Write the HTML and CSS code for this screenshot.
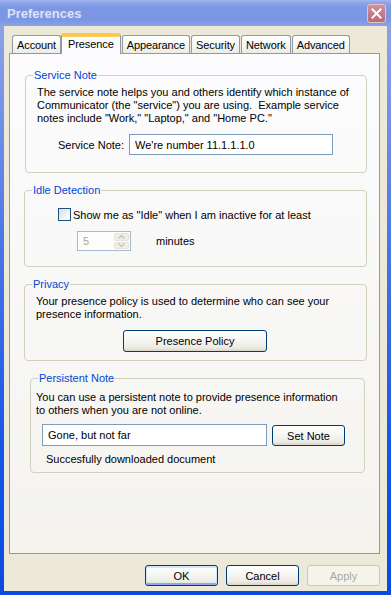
FILE: index.html
```html
<!DOCTYPE html>
<html lang="en">
<head>
    <meta charset="UTF-8">
    <title>Preferences</title>
    <link rel="stylesheet" href="styles.css">
</head>
<body>
<div class="window">
    <div class="titlebar">
        <span class="title">Preferences</span>
        <span class="close-btn">
            <svg width="11" height="11" viewBox="0 0 11 11"><path d="M1.5 1.5 L9.5 9.5 M9.5 1.5 L1.5 9.5" stroke="#fff" stroke-width="2" stroke-linecap="square"/></svg>
        </span>
    </div>

    <div class="frame">
        <div class="tabs">
            <div class="tab">Account</div>
            <div class="tab active">Presence</div>
            <div class="tab">Appearance</div>
            <div class="tab">Security</div>
            <div class="tab">Network</div>
            <div class="tab">Advanced</div>
        </div>

        <div class="panel">
            <fieldset class="group group-service">
                <legend>Service Note</legend>
                <p class="desc">The service note helps you and others identify which instance of<br>Communicator (the "service") you are using.&nbsp; Example service<br>notes include "Work," "Laptop," and "Home PC."</p>
                <div class="note-row">
                    <label for="serviceNote">Service Note:</label>
                    <input type="text" id="serviceNote" class="textbox service-input" value="We're number 11.1.1.1.0">
                </div>
            </fieldset>

            <fieldset class="group group-idle">
                <legend>Idle Detection</legend>
                <div class="check-row">
                    <span class="checkbox"></span>
                    <span>Show me as "Idle" when I am inactive for at least</span>
                </div>
                <div class="spin-row">
                    <div class="spinner">
                        <span class="spin-value">5</span>
                        <span class="spin-buttons">
                            <span class="spin-btn"><svg width="7" height="4" viewBox="0 0 7 4"><path d="M0.5 3.5 L3.5 0.5 L6.5 3.5" fill="none" stroke="#c4c3b6" stroke-width="1.2"/></svg></span>
                            <span class="spin-btn"><svg width="7" height="4" viewBox="0 0 7 4"><path d="M0.5 0.5 L3.5 3.5 L6.5 0.5" fill="none" stroke="#c4c3b6" stroke-width="1.2"/></svg></span>
                        </span>
                    </div>
                    <span class="spin-label">minutes</span>
                </div>
            </fieldset>

            <fieldset class="group group-privacy">
                <legend>Privacy</legend>
                <p class="desc">Your presence policy is used to determine who can see your<br>presence information.</p>
                <div class="center-row">
                    <button class="btn policy-btn">Presence Policy</button>
                </div>
            </fieldset>

            <fieldset class="group group-persistent">
                <legend>Persistent Note</legend>
                <p class="desc">You can use a persistent note to provide presence information<br>to others when you are not online.</p>
                <div class="persist-row">
                    <input type="text" class="textbox persist-input" value="Gone, but not far">
                    <button class="btn setnote-btn">Set Note</button>
                </div>
                <div class="status">Succesfully downloaded document</div>
            </fieldset>
        </div>

        <div class="dialog-buttons">
            <button class="btn default">OK</button>
            <button class="btn">Cancel</button>
            <button class="btn" disabled>Apply</button>
        </div>
    </div>
</div>
</body>
</html>
```

FILE: styles.css
```css
body {
    margin: 0;
    font-family: "Liberation Sans", Arial, sans-serif;
    font-size: 11px;
    color: #000;
    background: #ece9d8;
}
.window {
    width: 391px;
    height: 595px;
    display: flex;
    flex-direction: column;
    overflow: hidden;
}
.titlebar {
    height: 26px;
    flex-shrink: 0;
    display: flex;
    align-items: center;
    justify-content: space-between;
    padding: 0 5px 0 7px;
    background: linear-gradient(#a3b6ef 0, #8aa2e8 3px, #7c97e3 8px, #7b96e2 20px, #8ba2e6 26px);
}
.title {
    font-weight: bold;
    font-size: 13px;
    color: #dbe4f8;
    padding-top: 1px;
}
.close-btn {
    width: 17px;
    height: 17px;
    border: 1px solid #e3c3cb;
    border-radius: 3px;
    background: linear-gradient(#d3909c, #c27886 60%, #b86a7a);
    display: flex;
    align-items: center;
    justify-content: center;
    margin-top: 1px;
}
.frame {
    flex-grow: 1;
    display: flex;
    flex-direction: column;
    border-style: solid;
    border-width: 0 4px 4px 4px;
    border-image: linear-gradient(#8ca3e8, #4a74e6 40%, #1556e8 75%, #0a4ce2) 1;
    background: #ece9d8;
    padding: 7px 7px 0 5px;
}

/* tabs */
.tabs {
    display: flex;
    align-items: flex-end;
    padding-left: 3px;
    height: 20px;
    position: relative;
    z-index: 1;
}
.tab {
    height: 18px;
    box-sizing: border-box;
    padding: 0 4px;
    margin-right: 1px;
    border: 1px solid #919b9c;
    border-bottom: none;
    border-radius: 3px 3px 0 0;
    background: linear-gradient(#ffffff, #f7f7f4 50%, #ecebe5);
    line-height: 18px;
    letter-spacing: -0.1px;
}
.tab.active {
    height: 21px;
    margin: 0 1px -1px -1px;
    padding: 0 6px;
    border-top: 3px solid #ffc83c;
    box-shadow: inset 0 1px 0 #f6d06a;
    background: #fcfcfe;
    line-height: 17px;
}

.panel {
    height: 501px;
    box-sizing: border-box;
    border: 1px solid #919b9c;
    background: linear-gradient(#fcfcfe, #f4f3ee);
    padding: 14px 0 0 14px;
}

/* group boxes */
.group {
    margin: 0 0 10px 0;
    padding: 4px 10px 0 11px;
    border: 1px solid #d0d0bf;
    border-radius: 4px;
    box-sizing: border-box;
    width: 343px;
}
.group legend {
    color: #0046d5;
    line-height: 14px;
    padding: 0 1px;
    margin-left: -4px;
}
.desc {
    margin: 0;
    line-height: 13px;
}
.group-service {
    margin-left: 1px;
    width: 342px;
    height: 105px;
}
.note-row {
    display: flex;
    align-items: center;
    margin-top: 9px;
    padding-left: 21px;
}
.note-row label {
    margin-right: 5px;
}
.textbox {
    font-family: inherit;
    font-size: 11px;
    border: 1px solid #7f9db9;
    background: #fff;
    padding: 0 5px;
    box-sizing: border-box;
    outline: none;
}
.service-input {
    width: 204px;
    height: 21px;
}

.group-idle {
    height: 84px;
    padding-top: 10px;
}
.check-row {
    display: flex;
    align-items: center;
    height: 15px;
    padding-left: 22px;
}
.checkbox {
    width: 13px;
    height: 13px;
    box-sizing: border-box;
    border: 1px solid #1c5180;
    background: linear-gradient(135deg, #dcdcd7, #fbfbf9 80%);
    margin-right: 2px;
}
.spin-row {
    display: flex;
    align-items: center;
    margin-top: 9px;
    padding-left: 41px;
}
.spinner {
    width: 54px;
    height: 20px;
    box-sizing: border-box;
    border: 1px solid #a7b9cf;
    background: #fdfdfc;
    display: flex;
    justify-content: space-between;
    padding: 1px;
}
.spin-value {
    color: #aca899;
    padding-left: 4px;
    line-height: 17px;
}
.spin-buttons {
    width: 15px;
    display: flex;
    flex-direction: column;
    gap: 1px;
}
.spin-btn {
    flex: 1;
    background: #efeee8;
    border: 1px solid #e4e3da;
    border-radius: 2px;
    display: flex;
    align-items: center;
    justify-content: center;
}
.spin-label {
    margin-left: 25px;
}

.group-privacy {
    height: 84px;
}
.center-row {
    display: flex;
    justify-content: center;
    margin-top: 9px;
    padding-right: 2px;
}
.btn {
    font-family: inherit;
    font-size: 11px;
    color: #000;
    height: 21px;
    box-sizing: border-box;
    border: 1px solid #003c74;
    border-radius: 3px;
    background: linear-gradient(#ffffff, #f6f6f3 45%, #ebeae3 85%, #d8d3c8);
    padding: 0;
}
.policy-btn {
    width: 144px;
    height: 22px;
}

.group-persistent {
    margin-left: 6px;
    width: 335px;
    height: 102px;
    padding: 6px 10px 0 5px;
}
.group-persistent legend {
    margin-left: 2px;
}
.persist-row {
    display: flex;
    align-items: flex-start;
    margin-top: 7px;
    padding-left: 6px;
}
.persist-input {
    width: 225px;
    height: 22px;
    padding-left: 5px;
}
.setnote-btn {
    width: 73px;
    margin: 1px 0 0 5px;
}
.status {
    margin-top: 7px;
    padding-left: 10px;
    line-height: 13px;
}

/* bottom buttons */
.dialog-buttons {
    display: flex;
    justify-content: flex-end;
    gap: 8px;
    margin-top: 11px;
    padding-right: 0;
}
.dialog-buttons .btn {
    width: 73px;
}
.btn.default {
    box-shadow: inset 0 1px 0 1px #cee7ff, inset 0 -1px 0 1px #8fa7ef;
}
.btn:disabled {
    border-color: #c9c7ba;
    color: #aca899;
    background: #f5f4ea;
}
```
